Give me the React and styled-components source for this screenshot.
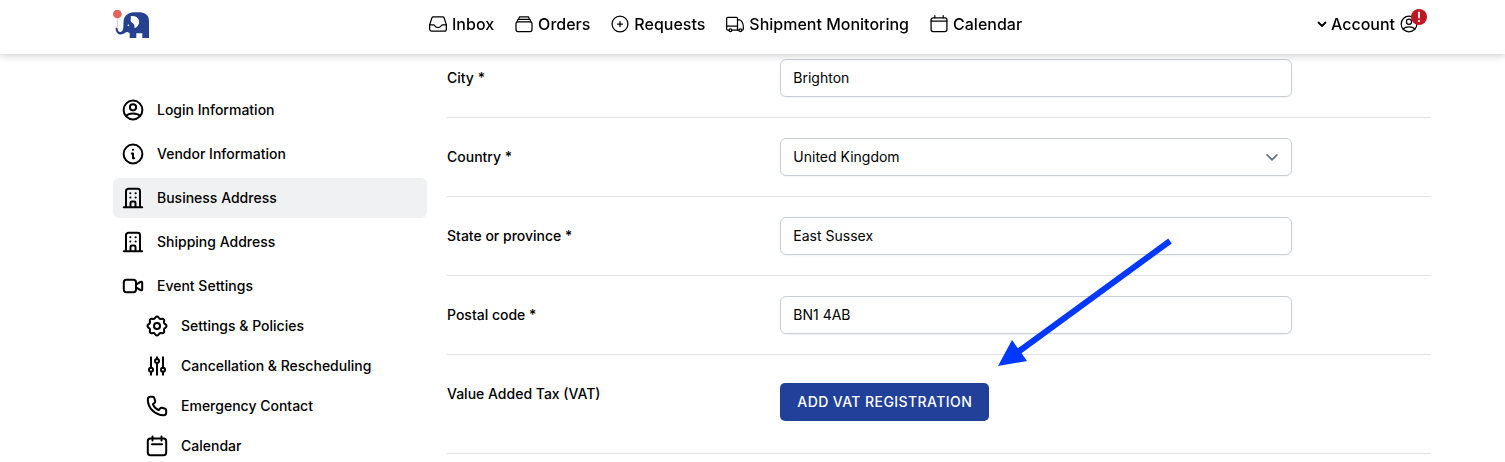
import React from 'react';
import styled, { createGlobalStyle, css } from 'styled-components';

const GlobalStyle = createGlobalStyle`
  *, *::before, *::after { box-sizing: border-box; }
  body {
    margin: 0;
    background: #fff;
    color: #000;
    font-family: Inter, "Liberation Sans", sans-serif;
    font-size: 14px;
    font-weight: 500;
    line-height: 20px;
  }
  input, select, button { font: inherit; color: inherit; }
`;

const Page = styled.div`
  height: 100vh;
  overflow-y: auto;
  scrollbar-width: none;
`;

const Header = styled.header`
  position: fixed;
  inset: 0 0 auto;
  z-index: 2;
  display: grid;
  grid-template-columns: 315px 1fr auto;
  align-items: center;
  height: 54px;
  padding: 0 86px 6px 113px;
  background: #fff;
  box-shadow: 0 1px 8px rgba(0, 0, 0, 0.22);
  font-size: 16px;
  line-height: 24px;
`;

const LogoLink = styled.a`
  display: flex;
`;

const TopNav = styled.nav`
  display: flex;
  gap: 20px;
`;

const TopLink = styled.a`
  display: flex;
  align-items: center;
  gap: 4px;
  color: inherit;
  text-decoration: none;
  white-space: nowrap;
`;

const AccountButton = styled.button`
  position: relative;
  display: flex;
  align-items: center;
  gap: 4px;
  padding: 0;
  border: 0;
  background: none;
  cursor: pointer;
`;

const Alert = styled.span`
  position: absolute;
  top: -3px;
  right: -8px;
  display: flex;
`;

const Layout = styled.div`
  display: grid;
  grid-template-columns: 314px minmax(0, 1fr);
  gap: 20px;
  padding: 0 74px 0 113px;
`;

const Sidebar = styled.nav`
  padding-top: 90px;
`;

const Menu = styled.ul`
  display: flex;
  flex-direction: column;
  gap: ${(p) => (p.$nested ? '0' : '4px')};
  margin: 0;
  padding: 0 0 0 ${(p) => (p.$nested ? '24px' : '0')};
  list-style: none;
`;

const MenuLink = styled.a`
  display: flex;
  align-items: center;
  gap: 12px;
  height: 40px;
  padding: 0 8px;
  border-radius: 6px;
  background: ${(p) => (p.$active ? '#f0f1f3' : 'transparent')};
  color: inherit;
  text-decoration: none;
`;

const Form = styled.form`
  position: relative;
  padding-top: 39px;
`;

const Row = styled.div`
  display: grid;
  grid-template-columns: repeat(3, minmax(0, 1fr));
  gap: 16px;
  padding: 20px 0;
  border-bottom: 1px solid #e1e3e6;
`;

const Label = styled.label`
  line-height: 38px;
`;

const Control = styled.div`
  grid-column: span 2;
  padding: ${(p) => (p.$action ? '8px 0 12px' : '0')};
`;

const field = css`
  display: block;
  width: 100%;
  max-width: 512px;
  height: 38px;
  padding: 0 12px;
  border: 1px solid #c9ced6;
  border-radius: 6px;
  background-color: #fff;
  box-shadow: 0 1px 2px rgba(0, 0, 0, 0.05);
  font-weight: 400;
`;

const TextInput = styled.input`
  ${field}
  padding-bottom: 2px;
`;

const SelectBox = styled.div`
  display: grid;
  align-items: center;
  max-width: 512px;
  & > * { grid-area: 1 / 1; }
  & > svg {
    justify-self: end;
    margin-right: 13px;
    color: #6b7280;
    pointer-events: none;
  }
`;

const Select = styled.select`
  ${field}
  appearance: none;
`;

const PrimaryButton = styled.button`
  display: block;
  height: 38px;
  padding: 0 17px;
  border: 0;
  border-radius: 5px;
  background: #21409a;
  color: #fff;
  letter-spacing: 0.03em;
  text-transform: uppercase;
  white-space: nowrap;
  cursor: pointer;
`;

const Pointer = styled.svg`
  position: absolute;
  top: 236px;
  left: 551px;
  pointer-events: none;
`;

// Outline of a cog with eight rounded teeth, centred in a 24-unit box.
const cogPoints = Array.from({ length: 96 }, (_, i) => {
  const angle = (i / 96) * Math.PI * 2;
  const radius = 8.6 + 0.9 * Math.cos(angle * 8);
  return `${(12 + radius * Math.cos(angle)).toFixed(2)},${(12 + radius * Math.sin(angle)).toFixed(2)}`;
}).join(' ');

const shapes = {
  inbox: (
    <>
      <path d="M2 13v5.2A2.3 2.3 0 0 0 4.3 20.5h15.4a2.3 2.3 0 0 0 2.3-2.3V13l-2.6-8.2A2 2 0 0 0 17.5 3.5h-11a2 2 0 0 0-1.9 1.3Z" />
      <path d="M2 13h4.2c1 0 1.6.5 2 1.2.6 1.2 1.4 2 3.8 2s3.2-.8 3.8-2c.4-.7 1-1.2 2-1.2H22" />
    </>
  ),
  stack: (
    <>
      <rect x="2.400" y="9.400" width="19.200" height="11.600" rx="2.400" />
      <path d="M3.600 9.400 4.800 6.500h14.400l1.200 2.900M5.500 6.500l1-3h11l1 3" />
    </>
  ),
  plus: (
    <>
      <circle cx="12" cy="12" r="9.500" />
      <path d="M12 9v6M9 12h6" />
    </>
  ),
  truck: (
    <>
      <path d="M4.600 19.200H3.200a1.200 1.200 0 0 1-1.200-1.200V5.200A1.200 1.200 0 0 1 3.200 4h10.600A1.200 1.200 0 0 1 15 5.200v14H8.400" />
      <path d="M2 14.400h13M15 7h2.400c2.600 0 4.600 5 4.600 8.500v2.500a1.200 1.200 0 0 1-1.200 1.200h-.4M15 19.200h1.600" />
      <circle cx="6.500" cy="19.400" r="1.700" />
      <circle cx="18.500" cy="19.400" r="1.700" />
    </>
  ),
  calendarTop: (
    <>
      <rect x="2.500" y="4.500" width="19" height="16.500" rx="2.400" />
      <path d="M2.500 8.500h19M7 2v2.500M17 2v2.500" />
    </>
  ),
  user: (
    <>
      <circle cx="12" cy="12" r="9.400" />
      <circle cx="12" cy="9.300" r="3.100" />
      <path d="M4.800 18c1.600-1.800 4-2.600 7.200-2.600s5.600.8 7.200 2.600" />
    </>
  ),
  info: (
    <>
      <circle cx="12" cy="12" r="9.400" />
      <path d="M10.800 11.500H12v4.700M11.800 7.800h.2M12 16.200h1.200" />
    </>
  ),
  building: (
    <>
      <path d="M2.800 21.200h18.400M5 21V5.200a2.400 2.400 0 0 1 2.400-2.400h9.200a2.400 2.400 0 0 1 2.400 2.400V21M9.500 21v-4a1.400 1.400 0 0 1 1.400-1.400h2.200a1.400 1.400 0 0 1 1.400 1.400v4" />
      <path d="M9.300 7.200h.1M14.600 7.200h.1M9.300 11.600h.1M14.600 11.600h.1" />
    </>
  ),
  video: (
    <>
      <rect x="2.800" y="5.800" width="12.200" height="12.400" rx="2.600" />
      <path d="M15 10.700 19.500 7.900c.9-.5 1.700-.2 1.700.8v6.600c0 1-.8 1.300-1.700.8L15 13.300" />
    </>
  ),
  gear: (
    <>
      <circle cx="12" cy="12" r="3" />
      <polygon points={cogPoints} />
    </>
  ),
  sliders: (
    <>
      <path d="M6 3.200v10.300M6 18v2.800M12 3.200v1.300M12 9v11.800M18 3.200v10.300M18 18v2.800" />
      <circle cx="6" cy="15.800" r="2" />
      <circle cx="12" cy="7" r="2" />
      <circle cx="18" cy="15.800" r="2" />
    </>
  ),
  phone: (
    <path d="M2.800 5.200a2.400 2.400 0 0 1 2.400-2.400h2.200a2 2 0 0 1 2 1.600c.2.900.5 1.800.8 2.700.2.700 0 1.300-.6 1.700L7.800 10.200a11 11 0 0 0 6 6l1.400-1.800c.4-.6 1-.8 1.700-.6.9.3 1.800.6 2.700.8a2 2 0 0 1 1.600 2v2.200a2.400 2.400 0 0 1-2.400 2.400C10 21.200 2.800 14 2.800 5.200Z" />
  ),
  calendar: (
    <>
      <rect x="2.800" y="4.600" width="18.400" height="16.600" rx="2.600" />
      <path d="M7 10.300h10M7.500 2.600v4M16.500 2.600v4" />
    </>
  ),
};

function Icon({ name, size = 24, weight = 2 }) {
  return (
    <svg width={size} height={size} viewBox="0 0 24 24" fill="none" stroke="currentColor" strokeWidth={weight} strokeLinecap="round" strokeLinejoin="round" aria-hidden="true">
      {shapes[name]}
    </svg>
  );
}

function Chevron({ size, weight }) {
  return (
    <svg width={size} height={size} viewBox="0 0 10 10" fill="none" stroke="currentColor" strokeWidth={weight} strokeLinecap="round" strokeLinejoin="round" aria-hidden="true">
      <path d="m1.500 3.500 3.500 3.500 3.500-3.500" />
    </svg>
  );
}

function Logo() {
  return (
    <svg width="37" height="30" viewBox="39 27 111 90" role="img" aria-label="Home">
      <path d="M52 53c-2 12 3 19-1 31" fill="none" stroke="#e9a09a" strokeWidth="2" />
      <circle cx="52" cy="42" r="13" fill="#e0645c" />
      <path
        fill="#26418f"
        d="M47 84c3-2 6-1 6 3 1 6 4 10 9 9 6-1 7-7 8-14 1-10-1-21 4-30 6-10 17-15 30-15 14-1 27-1 36 7 6 5 7 13 7 22v48h-20v-14h-18v14H89V99l-7-3c-4-1-6 2-9 4-5 4-13 5-19 1-5-4-8-11-7-17Z"
      />
      <path d="M92 49c10-3 20 1 24 10 4 10-1 20-12 26-1-5 0-9-3-13s-8-4-9-9c-1-4 2-9 0-14Z" fill="#fff" />
      <circle cx="85" cy="76" r="2.500" fill="#fff" />
    </svg>
  );
}

const topLinks = [
  ['inbox', 'Inbox'],
  ['stack', 'Orders'],
  ['plus', 'Requests'],
  ['truck', 'Shipment Monitoring'],
  ['calendarTop', 'Calendar'],
];

const sections = [
  ['user', 'Login Information'],
  ['info', 'Vendor Information'],
  ['building', 'Business Address'],
  ['building', 'Shipping Address'],
  ['video', 'Event Settings'],
];

const eventSections = [
  ['gear', 'Settings & Policies'],
  ['sliders', 'Cancellation & Rescheduling'],
  ['phone', 'Emergency Contact'],
  ['calendar', 'Calendar'],
];

function MenuItem({ icon, active, text, children }) {
  return (
    <li>
      <MenuLink href="#" $active={active} aria-current={active ? 'page' : undefined}>
        <Icon name={icon} />
        {text}
      </MenuLink>
      {children}
    </li>
  );
}

function TextRow({ id, label, value }) {
  return (
    <Row>
      <Label htmlFor={id}>{label}</Label>
      <Control>
        <TextInput id={id} defaultValue={value} />
      </Control>
    </Row>
  );
}

export default function App() {
  return (
    <>
      <GlobalStyle />
      <Page>
        <Header>
          <LogoLink href="#"><Logo /></LogoLink>
          <TopNav>
            {topLinks.map(([icon, text]) => (
              <TopLink key={text} href="#">
                <Icon name={icon} size={20} weight={1.5} />
                {text}
              </TopLink>
            ))}
          </TopNav>
          <AccountButton type="button">
            <Chevron size={10} weight={1.8} />
            Account
            <Icon name="user" size={20} weight={1.5} />
            <Alert>
              <svg width="16" height="16" viewBox="0 0 16 16" role="img" aria-label="Attention needed">
                <circle cx="8" cy="8" r="8" fill="#be1622" />
                <path d="M8 3.500v5" stroke="#fff" strokeWidth="1.800" strokeLinecap="round" />
                <circle cx="8" cy="12" r="1.100" fill="#fff" />
              </svg>
            </Alert>
          </AccountButton>
        </Header>
        <Layout>
          <Sidebar aria-label="Account settings">
            <Menu>
              {sections.map(([icon, text]) => (
                <MenuItem key={text} icon={icon} text={text} active={text === 'Business Address'}>
                  {text === 'Event Settings' && (
                    <Menu $nested>
                      {eventSections.map(([subIcon, subText]) => (
                        <MenuItem key={subText} icon={subIcon} text={subText} />
                      ))}
                    </Menu>
                  )}
                </MenuItem>
              ))}
            </Menu>
          </Sidebar>
          <Form>
            <TextRow id="city" label="City *" value="Brighton" />
            <Row>
              <Label htmlFor="country">Country *</Label>
              <Control>
                <SelectBox>
                  <Select id="country" defaultValue="United Kingdom">
                    <option>United Kingdom</option>
                  </Select>
                  <Chevron size={14} weight={1.2} />
                </SelectBox>
              </Control>
            </Row>
            <TextRow id="state" label="State or province *" value="East Sussex" />
            <TextRow id="postal" label="Postal code *" value="BN1 4AB" />
            <Row>
              <Label htmlFor="vat">Value Added Tax (VAT)</Label>
              <Control $action>
                <PrimaryButton id="vat" type="button">Add VAT registration</PrimaryButton>
              </Control>
            </Row>
            <Pointer width="176" height="132" viewBox="0 0 176 132" aria-hidden="true">
              <path d="M172 5 20 116" stroke="#0038ff" strokeWidth="6" />
              <path d="m0 130 14-26 15 21Z" fill="#0038ff" />
            </Pointer>
          </Form>
        </Layout>
      </Page>
    </>
  );
}
